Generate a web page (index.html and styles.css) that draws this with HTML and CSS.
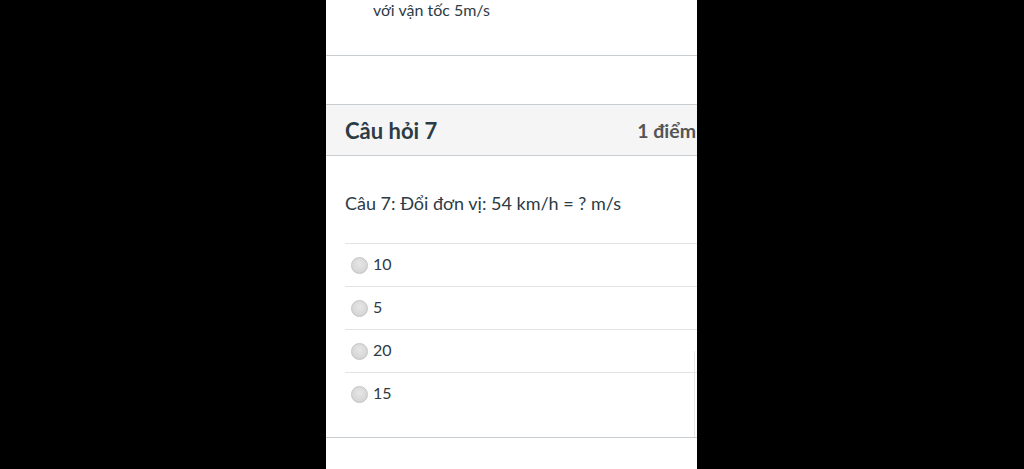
FILE: index.html
```html
<!DOCTYPE html>
<html lang="vi">
<head>
<meta charset="utf-8">
<link rel="stylesheet" href="styles.css">
</head>
<body>
<div class="stage">
  <div class="panel">
    <div class="prev">
      <p class="prev-text">với vận tốc 5m/s</p>
    </div>
    <div class="gap"></div>
    <div class="question">
      <div class="q-header">
        <h2 class="q-title">Câu hỏi 7</h2>
        <span class="q-points">1 điểm</span>
      </div>
      <div class="q-body">
        <p class="q-text">Câu 7: Đổi đơn vị: 54 km/h = ? m/s</p>
        <div class="answers">
          <label class="answer"><span class="radio"></span><span class="a-text">10</span></label>
          <label class="answer"><span class="radio"></span><span class="a-text">5</span></label>
          <label class="answer"><span class="radio"></span><span class="a-text">20</span></label>
          <label class="answer"><span class="radio"></span><span class="a-text">15</span></label>
        </div>
        <span class="edge"></span>
      </div>
    </div>
  </div>
</div>
</body>
</html>
```
FILE: styles.css
```css
* { box-sizing: border-box; }
html, body { margin: 0; padding: 0; background: #000; }
body { font-family: Lato, "Noto Sans", sans-serif; color: #2d3b45; }
.stage { width: 1024px; height: 469px; display: flex; justify-content: flex-start; overflow: hidden; }
.panel { margin-left: 326px; width: 371px; height: 469px; background: #fff; overflow: hidden; }
.prev { height: 56px; border-bottom: 1px solid #c7cdd1; padding-left: 47px; }
.prev-text { margin: 0; font-size: 16px; line-height: 20px; color: #2d3b45; }
.gap { height: 48px; }
.q-header { height: 52px; background: #f5f5f5; border-top: 1px solid #c7cdd1; border-bottom: 1px solid #c7cdd1; display: flex; align-items: center; justify-content: space-between; padding-left: 19px; white-space: nowrap; }
.q-title { margin: 0; font-size: 22px; font-weight: 700; color: #2d3b45; line-height: 1; margin-top: 2px; }
.q-points { font-size: 19.5px; font-weight: 700; color: #555; margin-right: 1px; }
.q-body { position: relative; padding: 0 0 0 19px; border-bottom: 1px solid #c7cdd1; height: 282px; }
.q-text { margin: 0; padding-top: 36px; height: 87px; font-size: 18px; line-height: 22px; color: #2d3b45; }
.answers { display: flex; flex-direction: column; }
.answer { display: flex; align-items: center; gap: 5px; height: 43px; border-top: 1px solid #e1e4e6; padding-left: 6px; padding-bottom: 2px; font-size: 16px; color: #2d3b45; }
.radio { width: 17px; height: 17px; border-radius: 50%; background: radial-gradient(circle at 50% 40%, #e6e6e6 0%, #d6d6d6 70%, #c8c8c8 100%); border: 1px solid #c4c4c4; margin-top: 2px; }
.a-text { line-height: 20px; }
.edge { position: absolute; right: 2px; top: 195px; bottom: 0; width: 1px; background: #e6e6e6; }
```
